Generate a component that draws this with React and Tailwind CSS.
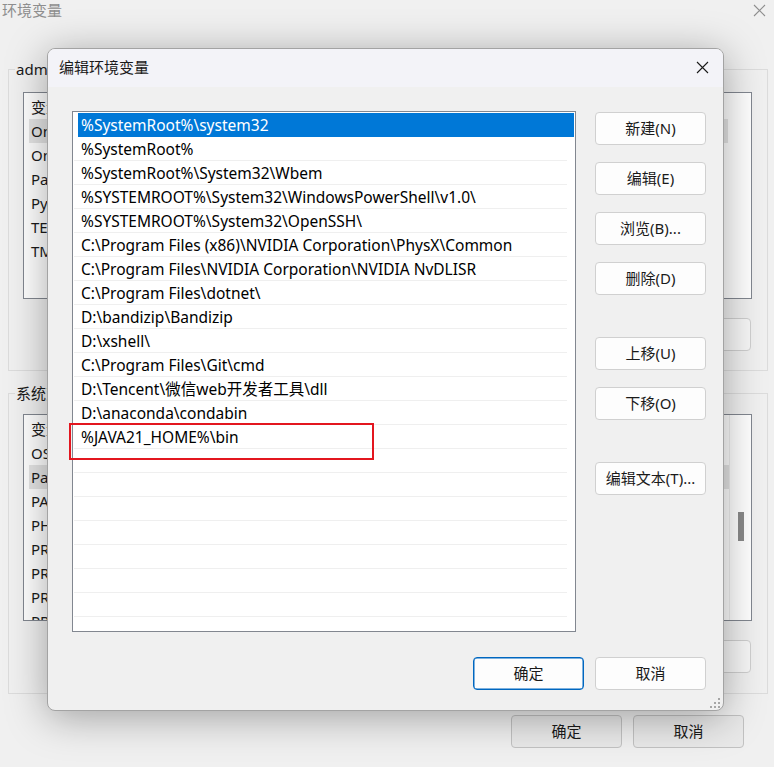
import React from "react";

const items = [
  String.raw`%SystemRoot%\system32`,
  String.raw`%SystemRoot%`,
  String.raw`%SystemRoot%\System32\Wbem`,
  String.raw`%SYSTEMROOT%\System32\WindowsPowerShell\v1.0\ `.trim(),
  String.raw`%SYSTEMROOT%\System32\OpenSSH\ `.trim(),
  String.raw`C:\Program Files (x86)\NVIDIA Corporation\PhysX\Common`,
  String.raw`C:\Program Files\NVIDIA Corporation\NVIDIA NvDLISR`,
  String.raw`C:\Program Files\dotnet\ `.trim(),
  String.raw`D:\bandizip\Bandizip`,
  String.raw`D:\xshell\ `.trim(),
  String.raw`C:\Program Files\Git\cmd`,
  String.raw`D:\Tencent\微信web开发者工具\dll`,
  String.raw`D:\anaconda\condabin`,
  String.raw`%JAVA21_HOME%\bin`,
];

const userVars = ["OneDrive", "OneDriveConsumer", "Path", "PyCharm", "TEMP", "TMP"];
const sysVars = ["OS", "Path", "PATHEXT", "PHPSTORM", "PROCESSOR_ARCHITECTURE", "PROCESSOR_IDENTIFIER", "PROCESSOR_LEVEL", "PROCESSOR_REVISION", "PSModulePath"];

function CloseIcon({ color = "#1a1a1a" }) {
  return (
    <svg width="13" height="13" viewBox="0 0 13 13" fill="none">
      <path d="M1 1 L12 12 M12 1 L1 12" stroke={color} strokeWidth="1.1" />
    </svg>
  );
}

function BgList({ rows, highlight, scroll }) {
  return (
    <div className="flex h-[207px] border border-[#828790] bg-white overflow-hidden">
      <div className="flex-1 flex flex-col pt-[2px] overflow-hidden">
        <div className="flex h-[24px] items-center pl-[7px] leading-[24px]">
          <span className="w-[200px]">变量</span>
          <span>值</span>
        </div>
        {rows.map((r, i) => (
          <div
            key={r}
            className={
              i === highlight
                ? scroll
                  ? "flex h-[24px] items-center ml-[5px] pl-[2px] leading-[24px] bg-[#e5e5e5]"
                  : "flex h-[24px] items-center ml-[5px] mr-[23px] pl-[2px] leading-[24px] bg-[#e5e5e5]"
                : "flex h-[24px] items-center ml-[5px] pl-[2px] leading-[24px]"
            }
          >
            <span className="w-[200px] whitespace-nowrap">{r}</span>
          </div>
        ))}
      </div>
      {scroll && (
        <div className="w-[22px] border-l border-[#eeeeee] flex justify-center">
          <div className="mt-[97px] w-[6px] h-[29px] bg-[#8a8a8a]" />
        </div>
      )}
    </div>
  );
}

function BgButtonsRow() {
  return (
    <div className="flex justify-end mt-[19px] pr-[1px]">
      <div className="w-[110px] h-[33px] rounded-[4px] border border-[#cfcfcf] bg-[#f7f7f7]" />
    </div>
  );
}

function DlgButton({ children, primary, className = "" }) {
  return (
    <div
      className={
        (primary
          ? "border-[#0067c0] shadow-[inset_0_0_0_0.5px_#0067c0] "
          : "border-[#d0d0d0] ") +
        "w-[111px] h-[33px] rounded-[4px] border bg-[#fdfdfd] flex items-center justify-center text-[15px] text-[#1a1a1a] whitespace-nowrap " +
        className
      }
    >
      {children}
    </div>
  );
}

export default function App() {
  const rows = Array.from({ length: 22 }, (_, i) => items[i] ?? "");
  return (
    <div className="relative w-[774px] h-[767px] overflow-hidden bg-[#f0f0f0] font-['Noto_Sans','Noto_Sans_CJK_SC',sans-serif] text-[15px] text-[#1a1a1a]">
      {/* background window */}
      <div className="flex flex-col h-full">
        <div className="flex h-[24px] items-start justify-between">
          <span className="ml-[2px] mt-[-1px] leading-[22px] text-[#8e8e8e]">环境变量</span>
          <div className="mr-[8px] mt-[4px]">
            <CloseIcon color="#8e8e8e" />
          </div>
        </div>

        <fieldset className="mt-[35px] ml-[8px] mr-[6px] border border-[#dcdcdc] pl-[14px] pr-[15px] pb-[19px]">
          <legend className="ml-[-8px] px-[1px] leading-[20px]">administrator 的用户变量(U)</legend>
          <div className="mt-[13px]">
            <BgList rows={userVars} highlight={0} />
          </div>
          <BgButtonsRow />
        </fieldset>

        <fieldset className="mt-[12px] ml-[8px] mr-[6px] border border-[#dcdcdc] pl-[14px] pr-[15px] pb-[20px]">
          <legend className="ml-[-8px] px-[1px] leading-[20px]">系统变量(S)</legend>
          <div className="mt-[11px]">
            <BgList rows={sysVars} highlight={1} scroll />
          </div>
          <BgButtonsRow />
        </fieldset>

        <div className="flex justify-end gap-[11px] mt-[21px] pr-[30px]">
          <div className="w-[111px] h-[33px] rounded-[4px] border border-[#c2c2c2] bg-[#e9e9e9] flex items-center justify-center">确定</div>
          <div className="w-[111px] h-[33px] rounded-[4px] border border-[#c2c2c2] bg-[#e9e9e9] flex items-center justify-center">取消</div>
        </div>
      </div>

      {/* dialog window */}
      <div className="absolute left-[47px] top-[48px] w-[677px] h-[663px] rounded-[8px] border border-[#a3a3a3] bg-[#f0f0f0] shadow-[0_6px_40px_rgba(0,0,0,0.34)] flex flex-col overflow-hidden">
        <div className="h-[38px] shrink-0 bg-[#f3f3f8] flex items-center justify-between">
          <span className="ml-[11px] mt-[-2px]">编辑环境变量</span>
          <div className="mr-[14px] mt-[-1px]">
            <CloseIcon />
          </div>
        </div>

        <div className="flex pl-[24px] pt-[24px]">
          <div className="w-[504px] h-[521px] border border-[#828790] bg-white pt-[1px] overflow-hidden text-[15.5px]">
            {rows.map((t, i) => (
              <div
                key={i}
                className={
                  i === 0
                    ? "ml-[5px] mr-[1px] h-[24px] pl-[3px] pt-[1px] leading-[23px] bg-[#0078d7] text-white whitespace-nowrap"
                    : "ml-[1px] mr-[8px] h-[24px] pl-[7px] pt-[2px] leading-[21px] border-b border-[#efefef] text-black whitespace-nowrap"
                }
              >
                {t}
              </div>
            ))}
          </div>

          <div className="ml-[19px] pt-[1px] flex flex-col">
            <DlgButton>新建(N)</DlgButton>
            <DlgButton className="mt-[17px]">编辑(E)</DlgButton>
            <DlgButton className="mt-[17px]">浏览(B)...</DlgButton>
            <DlgButton className="mt-[17px]">删除(D)</DlgButton>
            <DlgButton className="mt-[42px]">上移(U)</DlgButton>
            <DlgButton className="mt-[17px]">下移(O)</DlgButton>
            <DlgButton className="mt-[42px]">编辑文本(T)...</DlgButton>
          </div>
        </div>

        <div className="flex justify-end gap-[11px] mt-[25px] pr-[17px]">
          <DlgButton primary>确定</DlgButton>
          <DlgButton>取消</DlgButton>
        </div>

        {/* annotation box */}
        <div className="absolute left-[21px] top-[374px] w-[305px] h-[37px] border-2 border-[#e3161f]" />

        {/* resize grip */}
        <svg className="absolute right-[2px] bottom-[1px]" width="12" height="12" viewBox="0 0 12 12">
          <rect x="9" y="1" width="2" height="2" fill="#a6a6a6" />
          <rect x="5" y="5" width="2" height="2" fill="#a6a6a6" />
          <rect x="9" y="5" width="2" height="2" fill="#a6a6a6" />
          <rect x="1" y="9" width="2" height="2" fill="#a6a6a6" />
          <rect x="5" y="9" width="2" height="2" fill="#a6a6a6" />
          <rect x="9" y="9" width="2" height="2" fill="#a6a6a6" />
        </svg>
      </div>
    </div>
  );
}
